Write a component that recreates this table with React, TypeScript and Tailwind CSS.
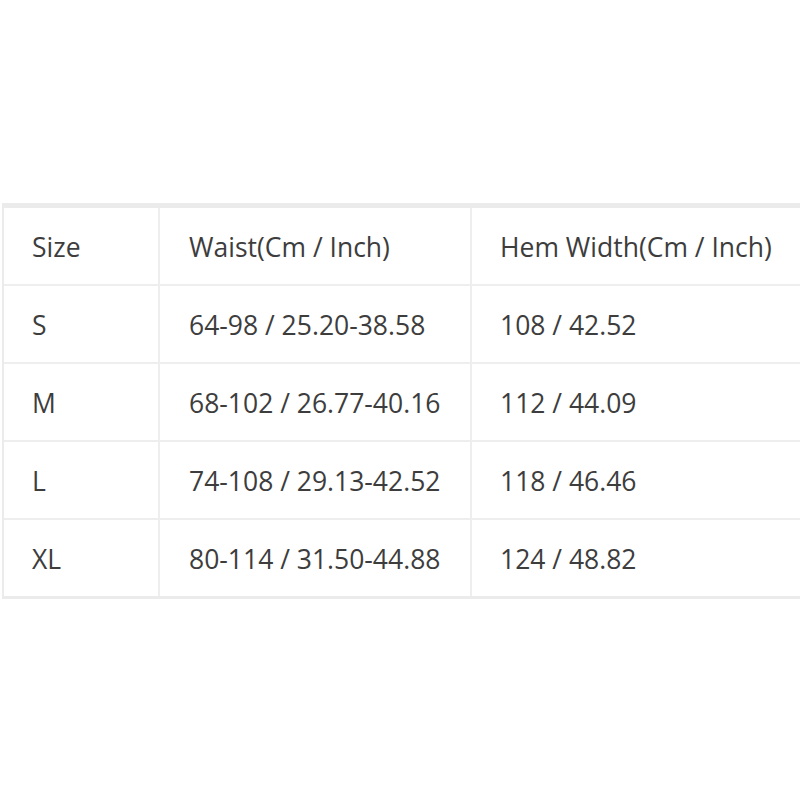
const rows = [
  ['Size', 'Waist(Cm / Inch)', 'Hem Width(Cm / Inch)'],
  ['S', '64-98 / 25.20-38.58', '108 / 42.52'],
  ['M', '68-102 / 26.77-40.16', '112 / 44.09'],
  ['L', '74-108 / 29.13-42.52', '118 / 46.46'],
  ['XL', '80-114 / 31.50-44.88', '124 / 48.82'],
];

export default function App() {
  return (
    <div className="w-[800px] h-[800px] bg-white overflow-hidden pt-[203px]">
      <div
        className="ml-[2px] w-[820px] border-t-[5px] border-b-[3px] border-l-2 border-[#ebebeb] text-[26.5px] text-[#3d3d3d]"
        style={{ fontFamily: '"Open Sans", "Noto Sans", sans-serif' }}
      >
        {rows.map((r, i) => (
          <div key={i} className={`flex items-center ${i > 0 ? 'h-[78px] border-t-2 border-[#eeeeee]' : 'h-[76px]'}`}>
            <div className="w-[156px] h-full flex items-center pt-[3px] pl-[28px] border-r-2 border-[#eeeeee]">{r[0]}</div>
            <div className="w-[312px] h-full flex items-center pt-[3px] pl-[29px] border-r-2 border-[#eeeeee]">{r[1]}</div>
            <div className="flex-1 h-full flex items-center pt-[3px] pl-[28px]">{r[2]}</div>
          </div>
        ))}
      </div>
    </div>
  );
}
